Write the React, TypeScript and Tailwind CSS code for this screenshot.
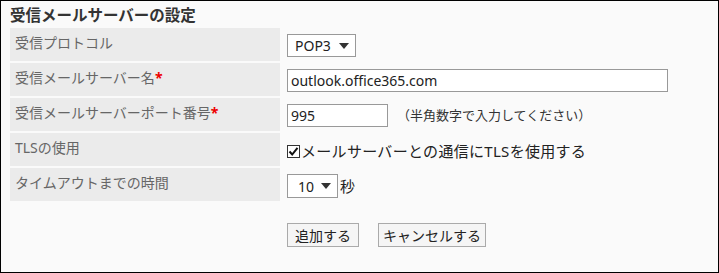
const font = { fontFamily: '"Noto Sans", "Noto Sans CJK JP", sans-serif' }

function Arrow() {
  return (
    <svg width="10" height="6" viewBox="0 0 10 6" className="shrink-0">
      <path d="M0 0 L10 0 L5 6 Z" fill="#333" />
    </svg>
  )
}

function Label({ text, required }: { text: string; required?: boolean }) {
  return (
    <div className="w-[270px] shrink-0 bg-[#ebebeb] pl-[5px] pt-[5px] text-[14px] leading-[20px] text-[#666]">
      {text}
      {required && <span className="font-bold text-[#e00]">*</span>}
    </div>
  )
}

export default function App() {
  const rows = [
    {
      label: '受信プロトコル',
      content: (
        <div className="mt-[6px] flex h-[23px] w-[69px] items-center justify-between border border-[#999] bg-white pl-[7px] pr-[6px] text-[14px] text-[#222]">
          <span>POP3</span>
          <Arrow />
        </div>
      ),
    },
    {
      label: '受信メールサーバー名',
      required: true,
      content: (
        <div className="mt-[6px] flex h-[23px] w-[381px] items-center border border-[#999] bg-white pl-[3px] text-[14px] text-[#222]">
          outlook.office365.com
        </div>
      ),
    },
    {
      label: '受信メールサーバーポート番号',
      required: true,
      content: (
        <div className="mt-[6px] flex items-center">
          <div className="flex h-[23px] w-[101px] items-center border border-[#999] bg-white pl-[3px] text-[14px] text-[#222]">
            995
          </div>
          <span className="ml-[9px] text-[13px] text-[#333]">（半角数字で入力してください）</span>
        </div>
      ),
    },
    {
      label: 'TLSの使用',
      content: (
        <div className="mt-[7px] flex items-center text-[15px] tracking-[0.3px] text-[#222]">
          <span className="flex h-[13px] w-[13px] items-center justify-center border border-[#333] bg-white">
            <svg width="11" height="11" viewBox="0 0 11 11">
              <path d="M1.5 5.5 L4.2 8.5 L9.5 1.8" stroke="#111" strokeWidth="2" fill="none" />
            </svg>
          </span>
          <span className="ml-[1px]">メールサーバーとの通信にTLSを使用する</span>
        </div>
      ),
    },
    {
      label: 'タイムアウトまでの時間',
      content: (
        <div className="mt-[6px] flex items-center text-[15px] text-[#222]">
          <div className="flex h-[24px] w-[51px] items-center justify-between border border-[#999] bg-white pl-[10px] pr-[6px] text-[14px]">
            <span>10</span>
            <Arrow />
          </div>
          <span className="ml-[2px]">秒</span>
        </div>
      ),
    },
  ]

  return (
    <div style={font} className="h-[273px] w-[719px] border border-black bg-[#fafafa]">
      <div className="pl-[9px] pt-[3px] text-[15.5px] font-bold leading-[22px] text-[#333]">
        受信メールサーバーの設定
      </div>
      <div className="mt-[2px] flex flex-col gap-[2px] pl-[9px]">
        {rows.map((r) => (
          <div key={r.label} className="flex h-[33px]">
            <Label text={r.label} required={r.required} />
            <div className="pl-[7px]">{r.content}</div>
          </div>
        ))}
      </div>
      <div className="mt-[22px] flex gap-[19px] pl-[286px] text-[14px] text-[#222]">
        <button className="h-[24px] border border-[#aaa] bg-[#f5f5f5] px-[7px]">追加する</button>
        <button className="h-[24px] border border-[#aaa] bg-[#f5f5f5] px-[4px]">キャンセルする</button>
      </div>
    </div>
  )
}
